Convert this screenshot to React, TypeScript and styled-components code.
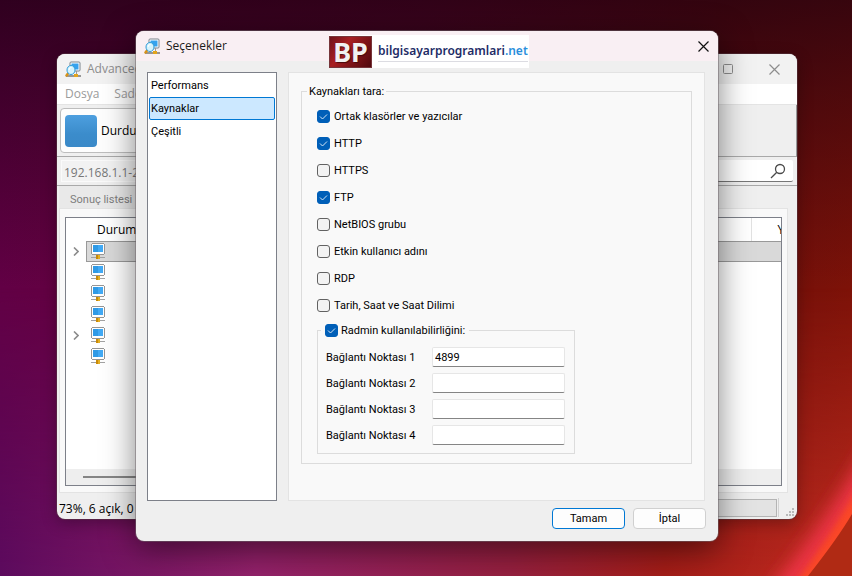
import React, { useState } from "react";
import styled, { createGlobalStyle, css } from "styled-components";

const GlobalStyle = createGlobalStyle`
  * { box-sizing: border-box; }
  body { margin: 0; font-family: "Open Sans", "Noto Sans", sans-serif; color: #000; }
  button, input { font: inherit; color: inherit; margin: 0; }
`;

const Desktop = styled.main`
  position: relative;
  min-height: 100vh;
  overflow: hidden;
  background: #4a0518;
`;

const Wallpaper = styled.svg`
  position: absolute;
  inset: 0;
  width: 100%;
  height: 100%;
`;

const WindowFrame = styled.section`
  position: absolute;
  display: flex;
  flex-direction: column;
  border-radius: 8px;
  overflow: hidden;
  background: #efefef;
`;

const MainWindow = styled(WindowFrame)`
  inset: 54px 55px 57px 57px;
  font-size: 12px;
  box-shadow: 0 0 0 1px rgba(90, 60, 70, 0.5), 0 4px 16px rgba(0, 0, 0, 0.3);
`;

const Dialog = styled(WindowFrame)`
  top: 31px;
  left: 136px;
  right: 134px;
  font-family: Roboto, "Noto Sans", sans-serif;
  font-size: 11px;
  line-height: 15px;
  box-shadow: 0 0 0 1px rgba(110, 100, 105, 0.5), 0 8px 32px rgba(0, 0, 0, 0.5);
`;

const TitleBar = styled.header<{ $active?: boolean }>`
  display: flex;
  align-items: center;
  height: 30px;
  flex: none;
  gap: 5px;
  padding: 0 8px;
  font-size: 12px;
  color: ${(p) => (p.$active ? "#1b1b1b" : "#8d8d8d")};
  background: ${(p) => (p.$active ? "#f9eff3" : "#f2f2f2")};
  ${(p) => p.$active && "padding-right: 0;"}
`;

const WindowTitle = styled.h1`
  margin: 0;
  flex: 1;
  font: 400 12px/16px "Open Sans", "Noto Sans", sans-serif;
`;

const CaptionButton = styled.button`
  display: grid;
  place-items: center;
  width: 30px;
  height: 28px;
  padding: 0;
  border: 0;
  background: none;
`;

const CaptionButtons = styled.div`
  display: flex;
  gap: 16px;
`;

const MenuBar = styled.nav`
  display: flex;
  gap: 15px;
  height: 21px;
  flex: none;
  padding: 0 8px;
  background: #fff;
  border-bottom: 1px solid #e4e4e4;
`;

const MenuItem = styled.button`
  padding: 0;
  border: 0;
  background: none;
  color: #9b9b9b;
  line-height: 20px;
`;

const Toolbar = styled.div`
  display: flex;
  height: 52px;
  flex: none;
  padding: 3px;
  border-bottom: 1px solid #a9a9a9;
  border-right: 1px solid #999;
`;

const StopButton = styled.button`
  display: flex;
  align-items: center;
  gap: 4px;
  width: 160px;
  padding: 0 4px;
  border: 1px solid #bdbdbd;
  border-radius: 4px;
  background: #fdfdfd;
`;

const StopGlyph = styled.span`
  width: 32px;
  height: 32px;
  border-radius: 4px;
  background: linear-gradient(#4d9fdf, #3b8ccb 60%, #3a89c8);
`;

const AddressRow = styled.div`
  display: flex;
  gap: 4px;
  height: 29px;
  flex: none;
  padding: 3px 4px;
  border-bottom: 1px solid #a9a9a9;
`;

const RangeInput = styled.input`
  width: 300px;
  padding: 2px 2px 0;
  border: 1px solid #fafafa;
  background: #f2f2f2;
  color: #777;
`;

const SearchBox = styled.div`
  display: flex;
  flex: 1;
  align-items: center;
  justify-content: flex-end;
  padding-right: 7px;
  background: #fff;
  border-bottom: 1px solid #777;
  border-radius: 2px;
`;

const TabRow = styled.div`
  display: flex;
  height: 22px;
  flex: none;
  padding-left: 2px;
`;

const Tab = styled.button`
  width: 120px;
  padding: 4px 11px 0;
  border: 0;
  background: #e9e9e9;
  color: #7d7d7d;
  font: 11px/15px Roboto, "Noto Sans", sans-serif;
  text-align: left;
`;

const TabPanel = styled.div`
  display: flex;
  flex: 1;
  margin: 0 9px 0 2px;
  padding: 8px 5px 6px;
  background: #f9f9f9;
  border: 1px solid #e3e3e3;
`;

const ResultBox = styled.div`
  display: flex;
  flex: 1;
  flex-direction: column;
  overflow: hidden;
  background: #fff;
  border: 1px solid #7d8089;
`;

const ResultTable = styled.table`
  width: 100%;
  border-collapse: collapse;
  table-layout: fixed;
`;

const StatusHead = styled.th`
  height: 23px;
  padding: 0 0 0 31px;
  font-weight: 400;
  text-align: left;
`;

const ClippedHead = styled.th`
  width: 30px;
  padding: 0 0 0 26px;
  overflow: hidden;
  border-left: 1px solid #e2e2e2;
  font-weight: 400;
  text-align: left;
`;

const ResultCell = styled.td`
  height: 21px;
  padding: 0;
`;

const ResultRow = styled.div`
  display: grid;
  grid-template-columns: 20px 1fr;
  align-items: center;
  justify-items: center;
  height: 21px;
`;

const HostCell = styled.div<{ $selected?: boolean }>`
  display: flex;
  align-items: center;
  width: 100%;
  height: 21px;
  padding-left: 4px;
  border: 1px solid transparent;
  border-right: 0;
  ${(p) =>
    p.$selected &&
    css`
      background: #d9d9d9;
      border-color: #999;
    `}
`;

const ScrollTrack = styled.div`
  display: flex;
  align-items: center;
  height: 16px;
  margin-top: auto;
  padding-left: 17px;
  background: #eee;
`;

const ScrollThumb = styled.span`
  width: 200px;
  height: 2px;
  background: #858585;
`;

const StatusBar = styled.footer`
  display: flex;
  align-items: flex-end;
  justify-content: space-between;
  height: 26px;
  flex: none;
  padding: 0 2px 2px;
  line-height: 17px;
`;

const StatusEnd = styled.div`
  display: flex;
  align-items: flex-end;
  gap: 1px;
`;

const ProgressTrack = styled.div`
  width: 160px;
  height: 18px;
  border: 1px solid #b4b4b4;
  background: #e3e3e3;
`;

const StatusDivider = styled.span`
  width: 1px;
  height: 19px;
  margin-right: 6px;
  background: #d2d2d2;
`;

const Watermark = styled.div`
  position: absolute;
  top: 4px;
  left: 193px;
  display: flex;
  align-items: center;
  gap: 6px;
  width: 200px;
  height: 33px;
  background: #fff;
`;

const Badge = styled.span`
  display: grid;
  place-items: center;
  width: 43px;
  height: 32px;
  border: 1px solid #77353a;
  background: linear-gradient(125deg, #6f1219, #a81f22 35%, #841519 60%, #50090e);
  color: #f1f1f1;
  font: 700 27px/28px "Noto Sans", sans-serif;
  text-shadow: 1px 1px 1px #4a0a0d;
`;

const SiteName = styled.span`
  padding-bottom: 1px;
  border-bottom: 1px solid #dcdce2;
  color: #1d2c66;
  font: 600 12px/18px "Noto Sans", sans-serif;
`;

const SiteSuffix = styled.span`
  color: #2a8fdc;
`;

const DialogBody = styled.div`
  display: flex;
  gap: 11px;
  padding: 11px 13px 7px 11px;
`;

const PageList = styled.nav`
  width: 130px;
  flex: none;
  padding: 1px;
  background: #fff;
  border: 1px solid #7d8089;
`;

const PageItem = styled.button<{ $selected: boolean }>`
  display: block;
  width: 100%;
  height: 23px;
  padding: 0 1px;
  border: 1px solid ${(p) => (p.$selected ? "#0078d4" : "transparent")};
  border-radius: 2px;
  background: ${(p) => (p.$selected ? "#cce8ff" : "none")};
  text-align: left;
`;

const Page = styled.div`
  flex: 1;
  min-height: 429px;
  padding: 11px 12px;
  background: #f9f9f9;
  border: 1px solid #e3e3e3;
`;

const Group = styled.fieldset`
  min-width: 0;
  margin: 0;
  padding: 0;
  border: 1px solid #dcdcdc;
`;

const GroupTitle = styled.legend`
  height: 15px;
  margin-left: 5px;
  padding: 0 2px;
`;

const GroupBody = styled.div`
  padding: 4px 15px 9px;
`;

const PortGroup = styled(Group)`
  width: fit-content;
  margin-top: 4px;
`;

const PortTitle = styled.legend`
  height: 15px;
  margin-left: 3px;
  padding: 0 4px;
`;

const PortGrid = styled.div`
  display: grid;
  grid-template-columns: 106px 133px;
  grid-auto-rows: 20px;
  row-gap: 6px;
  align-items: center;
  padding: 9px 9px 8px 8px;
`;

const PortInput = styled.input`
  width: 100%;
  height: 20px;
  padding: 0 2px;
  border: 1px solid #e6e6e6;
  border-bottom-color: #858585;
  border-radius: 2px;
  background: #fff;
  outline: none;
`;

const OptionRow = styled.div`
  display: flex;
  align-items: center;
  height: 27px;
`;

const CheckLabel = styled.label<{ $gap: number }>`
  display: flex;
  align-items: center;
  gap: ${(p) => p.$gap}px;
`;

const CheckHolder = styled.span`
  display: grid;
  flex: none;
  width: 13px;
  height: 13px;
  & > * { grid-area: 1 / 1; }
`;

const CheckInput = styled.input`
  appearance: none;
  width: 13px;
  height: 13px;
  border: 1px solid #626262;
  border-radius: 3px;
  background: #f3f3f3;
  &:checked { background: #005fb8; border-color: #005fb8; }
`;

const Tick = styled.svg`
  pointer-events: none;
`;

const Actions = styled.footer`
  display: flex;
  justify-content: flex-end;
  gap: 8px;
  padding: 0 12px 12px;
`;

const ActionButton = styled.button<{ $primary?: boolean }>`
  width: 73px;
  height: 21px;
  padding: 0;
  border: 1px solid ${(p) => (p.$primary ? "#0078d4" : "#d0d0d0")};
  border-radius: 4px;
  background: #fdfdfd;
`;

function AppIcon() {
  return (
    <svg width="17" height="17" viewBox="0 0 17 17" aria-hidden="true">
      <rect x="5" y="1" width="10" height="9" rx="1" fill="#fff" stroke="#7b838b" />
      <rect x="6.500" y="2.500" width="7" height="6" fill="#35a2ee" />
      <path d="M11.500 10v4" stroke="#999" />
      <path d="M1 15h15" stroke="#777" strokeWidth="1.500" />
      <rect x="9" y="13" width="4" height="3" fill="#e3a51c" />
      <path d="M3 12.500L1.500 14.500" stroke="#d5921b" strokeWidth="2.500" strokeLinecap="round" />
      <ellipse cx="6" cy="9" rx="4" ry="4.500" fill="#d5f3fd" stroke="#2d9bd8" />
      <path d="M4 9a2.500 2.500 0 0 1 2.500-2.500" stroke="#fff" fill="none" />
    </svg>
  );
}

function HostIcon() {
  return (
    <svg width="14" height="17" viewBox="0 0 14 17" shapeRendering="crispEdges" aria-hidden="true">
      <path d="M1 .5h12M.5 1v10M13.500 1v10M1 11.500h12" stroke="#969696" />
      <rect x="1" y="1" width="12" height="10" fill="#fff" />
      <rect x="2" y="2" width="5" height="7" fill="#2f9ae6" />
      <rect x="7" y="2" width="5" height="7" fill="#42aaf5" />
      <path d="M6 12h2v1H6z" fill="#888" />
      <path d="M0 14h14" stroke="#a3a3a3" />
      <rect x="5" y="12" width="4" height="4" fill="#c98a08" />
      <rect x="7" y="12" width="2" height="4" fill="#e6b022" />
    </svg>
  );
}

function Chevron() {
  return (
    <svg width="6" height="9" viewBox="0 0 6 9" fill="none" stroke="#8b8b8b" strokeWidth="1.600" aria-hidden="true">
      <path d="M1 .5l4 4-4 4" />
    </svg>
  );
}

function CloseGlyph({ color }: { color: string }) {
  return (
    <svg width="11" height="11" viewBox="0 0 11 11" stroke={color} strokeWidth="1.200" aria-hidden="true">
      <path d="M.5.5l10 10M10.500.5l-10 10" />
    </svg>
  );
}

function Background() {
  return (
    <Wallpaper viewBox="0 0 852 576" preserveAspectRatio="none" aria-hidden="true">
      <defs>
        <linearGradient id="base" x1="0" x2="1">
          <stop offset="0" stopColor="#620045" />
          <stop offset="0.5" stopColor="#6a0930" />
          <stop offset="0.85" stopColor="#700f0c" />
          <stop offset="1" stopColor="#7d1208" />
        </linearGradient>
        <linearGradient id="night" x2="0" y2="1">
          <stop offset="0" stopColor="#1c0010" stopOpacity="0.72" />
          <stop offset="0.15" stopColor="#1c0010" stopOpacity="0.5" />
          <stop offset="0.5" stopColor="#1c0010" stopOpacity="0" />
        </linearGradient>
        <linearGradient id="floor" x1="0" x2="1">
          <stop offset="0" stopColor="#5c0a5e" />
          <stop offset="0.3" stopColor="#92216a" />
          <stop offset="0.6" stopColor="#96203f" />
          <stop offset="0.78" stopColor="#a31d18" />
          <stop offset="1" stopColor="#c22c20" />
        </linearGradient>
        <linearGradient id="fade" x2="0" y2="1">
          <stop offset="0.5" stopColor="#000" />
          <stop offset="1" stopColor="#fff" />
        </linearGradient>
        <mask id="floorMask">
          <rect width="852" height="576" fill="url(#fade)" />
        </mask>
        <filter id="soft" x="-50%" y="-50%" width="200%" height="200%">
          <feGaussianBlur stdDeviation="9" />
        </filter>
        <filter id="edge" x="-50%" y="-50%" width="200%" height="200%">
          <feGaussianBlur stdDeviation="3" />
        </filter>
      </defs>
      <rect width="852" height="576" fill="url(#base)" />
      <rect width="852" height="576" fill="url(#night)" />
      <rect width="852" height="576" fill="url(#floor)" mask="url(#floorMask)" />
      <path d="M880 450Q835 530 780 596" stroke="#f2364a" strokeWidth="22" fill="none" filter="url(#soft)" />
      <path d="M868 468Q836 530 786 596H808L868 514Z" fill="#fb4726" filter="url(#edge)" />
      <path d="M852 514Q838 538 808 576H852Z" fill="#b02a14" />
    </Wallpaper>
  );
}

function Check({ label, initial, gap = 4 }: { label: string; initial: boolean; gap?: number }) {
  const [checked, setChecked] = useState(initial);
  return (
    <CheckLabel $gap={gap}>
      <CheckHolder>
        <CheckInput type="checkbox" checked={checked} onChange={(e) => setChecked(e.target.checked)} />
        {checked && (
          <Tick width="13" height="13" viewBox="0 0 13 13" fill="none" stroke="#d5e6f5" aria-hidden="true">
            <path d="M3 6.500l2.500 2.500L10 4.500" />
          </Tick>
        )}
      </CheckHolder>
      {label}
    </CheckLabel>
  );
}

const hosts = [true, false, false, false, true, false];
const pages = ["Performans", "Kaynaklar", "Çeşitli"];
const options: [string, boolean][] = [
  ["Ortak klasörler ve yazıcılar", true],
  ["HTTP", true],
  ["HTTPS", false],
  ["FTP", true],
  ["NetBIOS grubu", false],
  ["Etkin kullanıcı adını", false],
  ["RDP", false],
  ["Tarih, Saat ve Saat Dilimi", false],
];
const ports = ["4899", "", "", ""];

function Scanner() {
  return (
    <MainWindow aria-label="Advanced">
      <TitleBar>
        <AppIcon />
        <WindowTitle>Advanced</WindowTitle>
        <CaptionButtons>
          <CaptionButton aria-label="Ekranı kapla">
            <svg width="10" height="10" fill="none" stroke="#8d8d8d" aria-hidden="true">
              <rect x="0.5" y="0.5" width="9" height="9" rx="1" />
            </svg>
          </CaptionButton>
          <CaptionButton aria-label="Kapat">
            <CloseGlyph color="#8d8d8d" />
          </CaptionButton>
        </CaptionButtons>
      </TitleBar>
      <MenuBar>
        <MenuItem>Dosya</MenuItem>
        <MenuItem>Sade</MenuItem>
      </MenuBar>
      <Toolbar>
        <StopButton>
          <StopGlyph />
          Durdu
        </StopButton>
      </Toolbar>
      <AddressRow>
        <RangeInput aria-label="IP aralığı" defaultValue="192.168.1.1-2" />
        <SearchBox>
          <svg width="16" height="16" viewBox="0 0 16 16" fill="none" stroke="#4a4a4a" strokeWidth="1.300" aria-label="Ara">
            <circle cx="10" cy="6" r="4.500" />
            <path d="M6.800 9.200L1 15" />
          </svg>
        </SearchBox>
      </AddressRow>
      <TabRow>
        <Tab>Sonuç listesi</Tab>
      </TabRow>
      <TabPanel>
        <ResultBox>
          <ResultTable>
            <thead>
              <tr>
                <StatusHead>Durum</StatusHead>
                <ClippedHead>Y</ClippedHead>
              </tr>
            </thead>
            <tbody>
              {hosts.map((expandable, i) => (
                <tr key={i}>
                  <ResultCell colSpan={2}>
                    <ResultRow>
                      {expandable ? <Chevron /> : <span />}
                      <HostCell $selected={i === 0}>
                        <HostIcon />
                      </HostCell>
                    </ResultRow>
                  </ResultCell>
                </tr>
              ))}
            </tbody>
          </ResultTable>
          <ScrollTrack>
            <ScrollThumb />
          </ScrollTrack>
        </ResultBox>
      </TabPanel>
      <StatusBar>
        <span>73%, 6 açık, 0 k</span>
        <StatusEnd>
          <ProgressTrack />
          <StatusDivider />
          <svg width="9" height="9" fill="#b9b9b9" aria-hidden="true">
            <path d="M6 0h2v2H6zM3 3h2v2H3zM6 3h2v2H6zM0 6h2v2H0zM3 6h2v2H3zM6 6h2v2H6z" />
          </svg>
        </StatusEnd>
      </StatusBar>
    </MainWindow>
  );
}

function Options() {
  const [page, setPage] = useState(1);
  return (
    <Dialog role="dialog" aria-label="Seçenekler">
      <TitleBar $active>
        <AppIcon />
        <WindowTitle>Seçenekler</WindowTitle>
        <CaptionButton aria-label="Kapat">
          <CloseGlyph color="#111" />
        </CaptionButton>
      </TitleBar>
      <Watermark>
        <Badge>BP</Badge>
        <SiteName>
          bilgisayarprogramlari<SiteSuffix>.net</SiteSuffix>
        </SiteName>
      </Watermark>
      <DialogBody>
        <PageList>
          {pages.map((name, i) => (
            <PageItem key={name} $selected={i === page} onClick={() => setPage(i)}>
              {name}
            </PageItem>
          ))}
        </PageList>
        <Page>
          <Group>
            <GroupTitle>Kaynakları tara:</GroupTitle>
            <GroupBody>
              {options.map(([label, on]) => (
                <OptionRow key={label}>
                  <Check label={label} initial={on} />
                </OptionRow>
              ))}
              <PortGroup>
                <PortTitle>
                  <Check label="Radmin kullanılabilirliğini:" initial gap={3} />
                </PortTitle>
                <PortGrid>
                  {ports.map((port, i) => (
                    <React.Fragment key={i}>
                      <label htmlFor={`port${i}`}>Bağlantı Noktası {i + 1}</label>
                      <PortInput id={`port${i}`} defaultValue={port} />
                    </React.Fragment>
                  ))}
                </PortGrid>
              </PortGroup>
            </GroupBody>
          </Group>
        </Page>
      </DialogBody>
      <Actions>
        <ActionButton $primary>Tamam</ActionButton>
        <ActionButton>İptal</ActionButton>
      </Actions>
    </Dialog>
  );
}

export default function App() {
  return (
    <Desktop>
      <GlobalStyle />
      <Background />
      <Scanner />
      <Options />
    </Desktop>
  );
}
